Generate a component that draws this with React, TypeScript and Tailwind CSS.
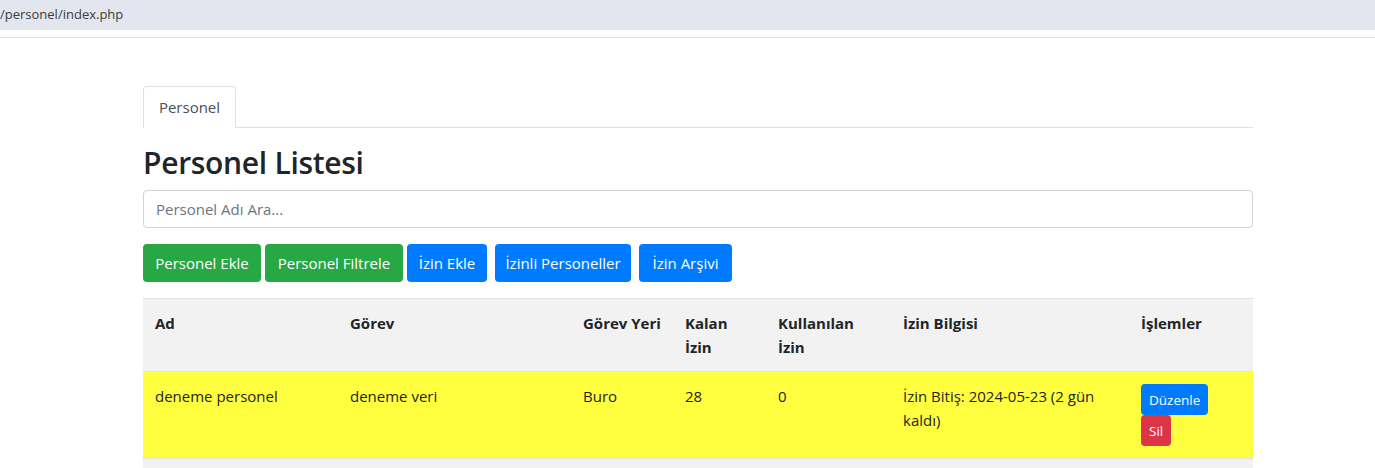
import React from "react";

const font = { fontFamily: '"Open Sans", "Noto Sans", sans-serif' };

const buttons = [
  { label: "Personel Ekle", cls: "bg-[#28a745] w-[118px] mr-[4px]" },
  { label: "Personel Filtrele", cls: "bg-[#28a745] w-[138px] mr-[4px]" },
  { label: "İzin Ekle", cls: "bg-[#007bff] w-[80px] mr-[8px]" },
  { label: "İzinli Personeller", cls: "bg-[#007bff] w-[136px] mr-[8px]" },
  { label: "İzin Arşivi", cls: "bg-[#007bff] w-[93px]" },
];

export default function App() {
  return (
    <div className="min-h-screen bg-white text-[#212529]" style={font}>
      {/* Address strip */}
      <div className="h-[30px] bg-[#e3e6ee] flex items-center text-[13px] text-[#3c3c3c]">
        /personel/index.php
      </div>
      <div className="h-[7px]" />
      <div className="h-px bg-[#dedede]" />

      <div className="ml-[143px] w-[1110px] pt-[48px]">
        {/* Tabs */}
        <div className="flex border-b border-[#dee2e6]">
          <div className="-mb-px h-[42px] w-[93px] flex items-center justify-center border border-[#dee2e6] border-b-white rounded-t bg-white text-[15px] text-[#495057]">
            Personel
          </div>
        </div>

        <h2 className="mt-[16px] mb-[8px] text-[30px] font-semibold leading-[38px] tracking-[-0.3px]">
          Personel Listesi
        </h2>

        <input
          className="block w-full h-[38px] px-3 border border-[#ced4da] rounded text-[15px] placeholder:text-[#6c757d] outline-none"
          placeholder="Personel Adı Ara..."
        />

        <div className="flex mt-[16px]">
          {buttons.map((b) => (
            <button
              key={b.label}
              className={`${b.cls} h-[38px] rounded text-white text-[15px] flex items-center justify-center`}
            >
              {b.label}
            </button>
          ))}
        </div>

        <table className="mt-[16px] w-full table-fixed border-collapse text-left text-[15px]">
          <colgroup>
            <col className="w-[195px]" />
            <col className="w-[233px]" />
            <col className="w-[102px]" />
            <col className="w-[93px]" />
            <col className="w-[125px]" />
            <col className="w-[238px]" />
            <col className="w-[124px]" />
          </colgroup>
          <thead>
            <tr className="bg-[#f2f2f2] border-t border-[#dee2e6]">
              {["Ad", "Görev", "Görev Yeri", "Kalan İzin", "Kullanılan İzin", "İzin Bilgisi", "İşlemler"].map((h) => (
                <th key={h} className="p-3 align-top font-bold leading-6 border-b border-[#dee2e6]">
                  {h}
                </th>
              ))}
            </tr>
          </thead>
          <tbody>
            <tr className="bg-[#ffff3f]">
              <td className="p-3 align-top leading-6">deneme personel</td>
              <td className="p-3 align-top leading-6">deneme veri</td>
              <td className="p-3 align-top leading-6">Buro</td>
              <td className="p-3 align-top leading-6">28</td>
              <td className="p-3 align-top leading-6">0</td>
              <td className="p-3 align-top leading-6">İzin Bitiş: 2024-05-23 (2 gün kaldı)</td>
              <td className="p-3 align-top leading-6">
                <button className="block h-[31px] px-2 rounded bg-[#007bff] text-white text-[13.5px]">
                  Düzenle
                </button>
                <button className="block h-[31px] px-2 rounded bg-[#dc3545] text-white text-[13.5px]">
                  Sil
                </button>
              </td>
            </tr>
            <tr className="bg-[#f2f2f2] border-t border-[#dee2e6]">
              <td colSpan={7} className="h-[40px]" />
            </tr>
          </tbody>
        </table>
      </div>
    </div>
  );
}
